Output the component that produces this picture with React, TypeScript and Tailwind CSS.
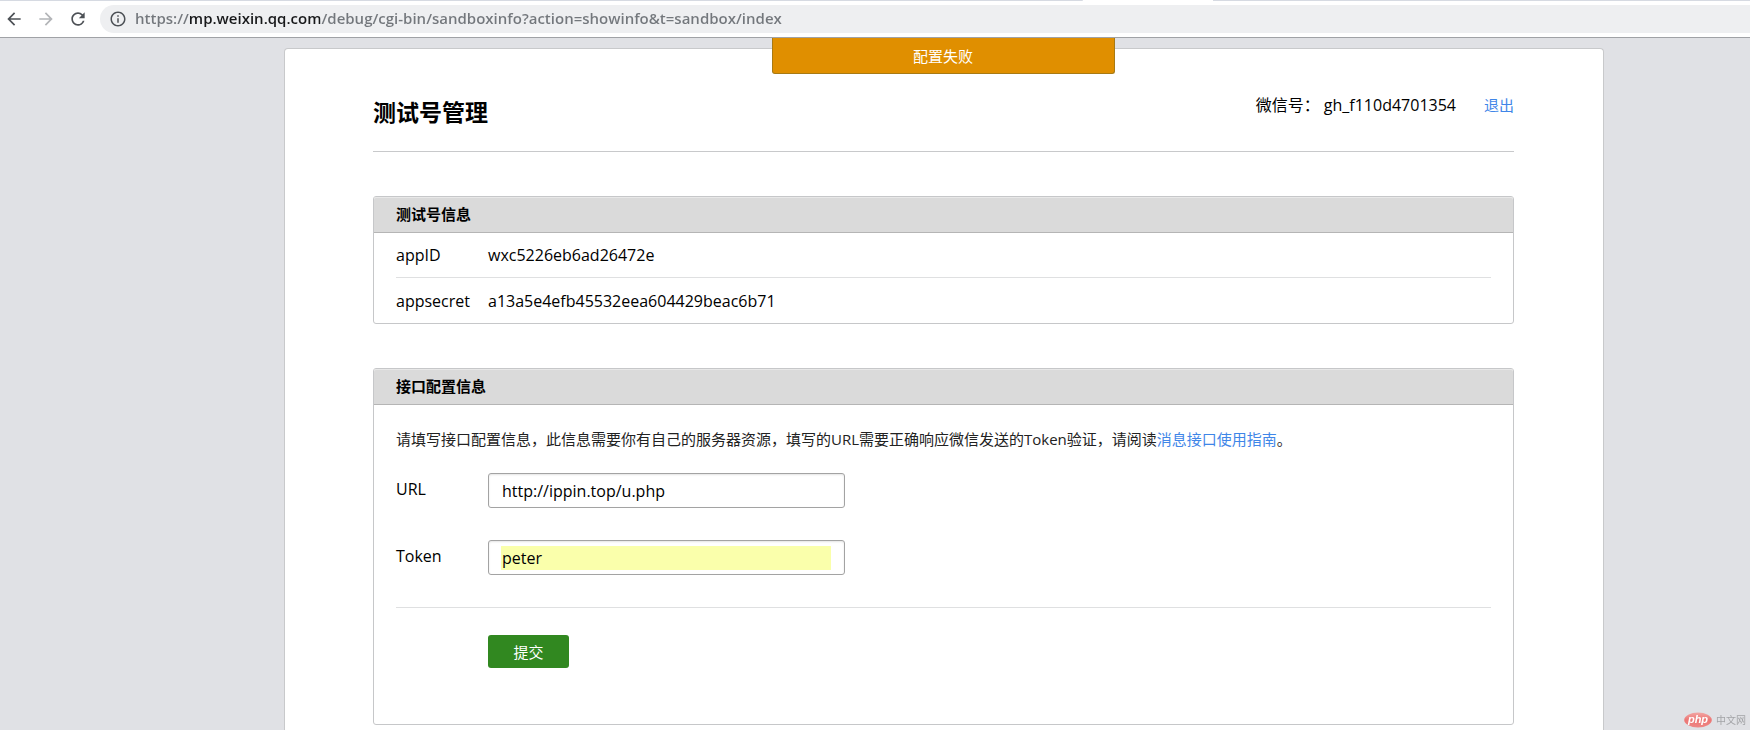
import type { ReactNode } from 'react';
import { MdArrowBack, MdArrowForward, MdInfoOutline, MdRefresh } from 'react-icons/md';

function BrowserBar() {
  return (
    <header className="flex h-[38px] shrink-0 flex-col border-b border-[#a0a2a6] bg-white">
      <div className="flex h-px w-full">
        <div className="w-[1083px] shrink-0 rounded-br-sm bg-[#d6dae2]" />
        <div className="w-[130px] shrink-0" />
        <div className="flex-1 bg-[#d6dae2]" />
      </div>
      <div className="flex flex-1 items-center pl-1">
        <nav className="flex shrink-0 items-center gap-3">
          <button type="button" aria-label="后退" className="text-[#4d5156]">
            <MdArrowBack size={20} />
          </button>
          <button type="button" aria-label="前进" className="text-[#b3b5b8]">
            <MdArrowForward size={20} />
          </button>
          <button type="button" aria-label="刷新" className="text-[#4d5156]">
            <MdRefresh size={20} />
          </button>
        </nav>
        <div className="ml-3 flex h-7 flex-1 items-center gap-2 rounded-l-full bg-[#eeeff1] pl-[9px]">
          <MdInfoOutline size={18} className="shrink-0 text-[#4d5156]" />
          <input
            type="text"
            aria-label="地址"
            defaultValue="https://mp.weixin.qq.com/debug/cgi-bin/sandboxinfo?action=showinfo&t=sandbox/index"
            className="h-7 min-w-0 flex-1 bg-[linear-gradient(90deg,#73777c_54px,#17181a_54px,#17181a_185px,#73777c_185px)] bg-clip-text pb-0.5 text-[15px] font-semibold text-transparent outline-none"
          />
        </div>
      </div>
    </header>
  );
}

function Panel({ title, children }: { title: string; children: ReactNode }) {
  return (
    <section className="rounded-[3px] border border-[#c6c7c9]">
      <h2 className="flex h-9 items-center rounded-t-[2px] border-b border-[#b5b5b5] bg-[#dadada] px-[22px] pb-0.5 font-bold shadow-[inset_0_1px_0_#e8e8e8]">
        {title}
      </h2>
      <div className="px-[22px]">{children}</div>
    </section>
  );
}

function InfoRow({ label, value }: { label: string; value: string }) {
  return (
    <div className="flex h-[45px] items-center border-b border-[#dfe0e1] text-base last:border-b-0">
      <dt className="w-[92px] shrink-0">{label}</dt>
      <dd>{value}</dd>
    </div>
  );
}

function Field({ id, label, value, filled }: { id: string; label: string; value: string; filled?: boolean }) {
  return (
    <div className="flex items-center text-base">
      <label htmlFor={id} className="w-[92px] shrink-0 pb-1">
        {label}
      </label>
      <div className="flex h-[35px] w-[357px] items-center rounded-[3px] border border-[#a3a3a3] pr-[13px] pl-3 shadow-[inset_0_1px_2px_#e4e4e4]">
        <input
          id={id}
          type="text"
          defaultValue={value}
          className={
            filled
              ? 'h-6 w-full bg-[#faffab] pl-px outline-none'
              : 'h-6 w-full bg-transparent pl-px outline-none'
          }
        />
      </div>
    </div>
  );
}

function Watermark() {
  return (
    <div className="fixed right-1 bottom-0.5 flex items-center gap-1 text-[#a3a4a7]">
      <svg width="28" height="16" viewBox="0 0 28 16" role="img" aria-label="php">
        <defs>
          <linearGradient id="badge" x1="0" y1="0" x2="0" y2="1">
            <stop offset="0" stopColor="#f2a5a3" />
            <stop offset="0.5" stopColor="#ec7674" />
            <stop offset="1" stopColor="#ee8785" />
          </linearGradient>
        </defs>
        <ellipse cx="14" cy="8" rx="13.8" ry="7.4" fill="url(#badge)" />
        <text x="14" y="11" textAnchor="middle" fontSize="11" fontStyle="italic" fontWeight="700" fill="#fff" fontFamily="Liberation Sans, sans-serif">
          php
        </text>
      </svg>
      <span className="text-[10px] leading-4">中文网</span>
    </div>
  );
}

export default function App() {
  return (
    <div className="flex min-h-screen flex-col bg-[#e0e1e5] font-['Open_Sans','Noto_Sans_CJK_SC',sans-serif] text-[15px] leading-6 text-black">
      <BrowserBar />
      <div className="relative flex flex-1 flex-col pt-[10px] pr-[146px] pl-[284px]">
        <div className="absolute inset-x-0 top-0 flex justify-center pr-[147px] pl-[283px]">
          <div role="alert" className="flex h-9 w-[343px] items-center justify-center rounded-b-[3px] border border-t-0 border-[#a87a14] bg-[#e08f00] text-white">
            配置失败
          </div>
        </div>
        <main className="flex-1 rounded-t-[4px] border border-b-0 border-[#c8c9cb] bg-white pr-[89px] pb-1 pl-[88px]">
          <div className="flex h-[103px] items-start justify-between border-b border-[#c8c9cb] pt-11">
            <h1 className="text-[23px] leading-[38px] font-bold">测试号管理</h1>
            <div className="flex text-base">
              <span>微信号： gh_f110d4701354</span>
              <a href="#logout" className="ml-7 text-[15px] leading-6 text-[#3f86e8]">
                退出
              </a>
            </div>
          </div>
          <div className="mt-11 flex flex-col gap-11">
            <Panel title="测试号信息">
              <dl>
                <InfoRow label="appID" value="wxc5226eb6ad26472e" />
                <InfoRow label="appsecret" value="a13a5e4efb45532eea604429beac6b71" />
              </dl>
            </Panel>
            <Panel title="接口配置信息">
              <form onSubmit={(event) => event.preventDefault()} className="pt-[22px] pb-14">
                <p className="text-[#222]">
                  请填写接口配置信息，此信息需要你有自己的服务器资源，填写的URL需要正确响应微信发送的Token验证，请阅读
                  <a href="#guide" className="text-[#3f86e8]">
                    消息接口使用指南
                  </a>
                  。
                </p>
                <div className="mt-[22px] flex flex-col gap-8 border-b border-[#dfe0e1] pb-8">
                  <Field id="url" label="URL" value="http://ippin.top/u.php" />
                  <Field id="token" label="Token" value="peter" filled />
                </div>
                <button type="submit" className="mt-[27px] ml-[92px] h-[33px] w-[81px] rounded-[3px] bg-[#318820] text-white">
                  提交
                </button>
              </form>
            </Panel>
          </div>
        </main>
      </div>
      <Watermark />
    </div>
  );
}
